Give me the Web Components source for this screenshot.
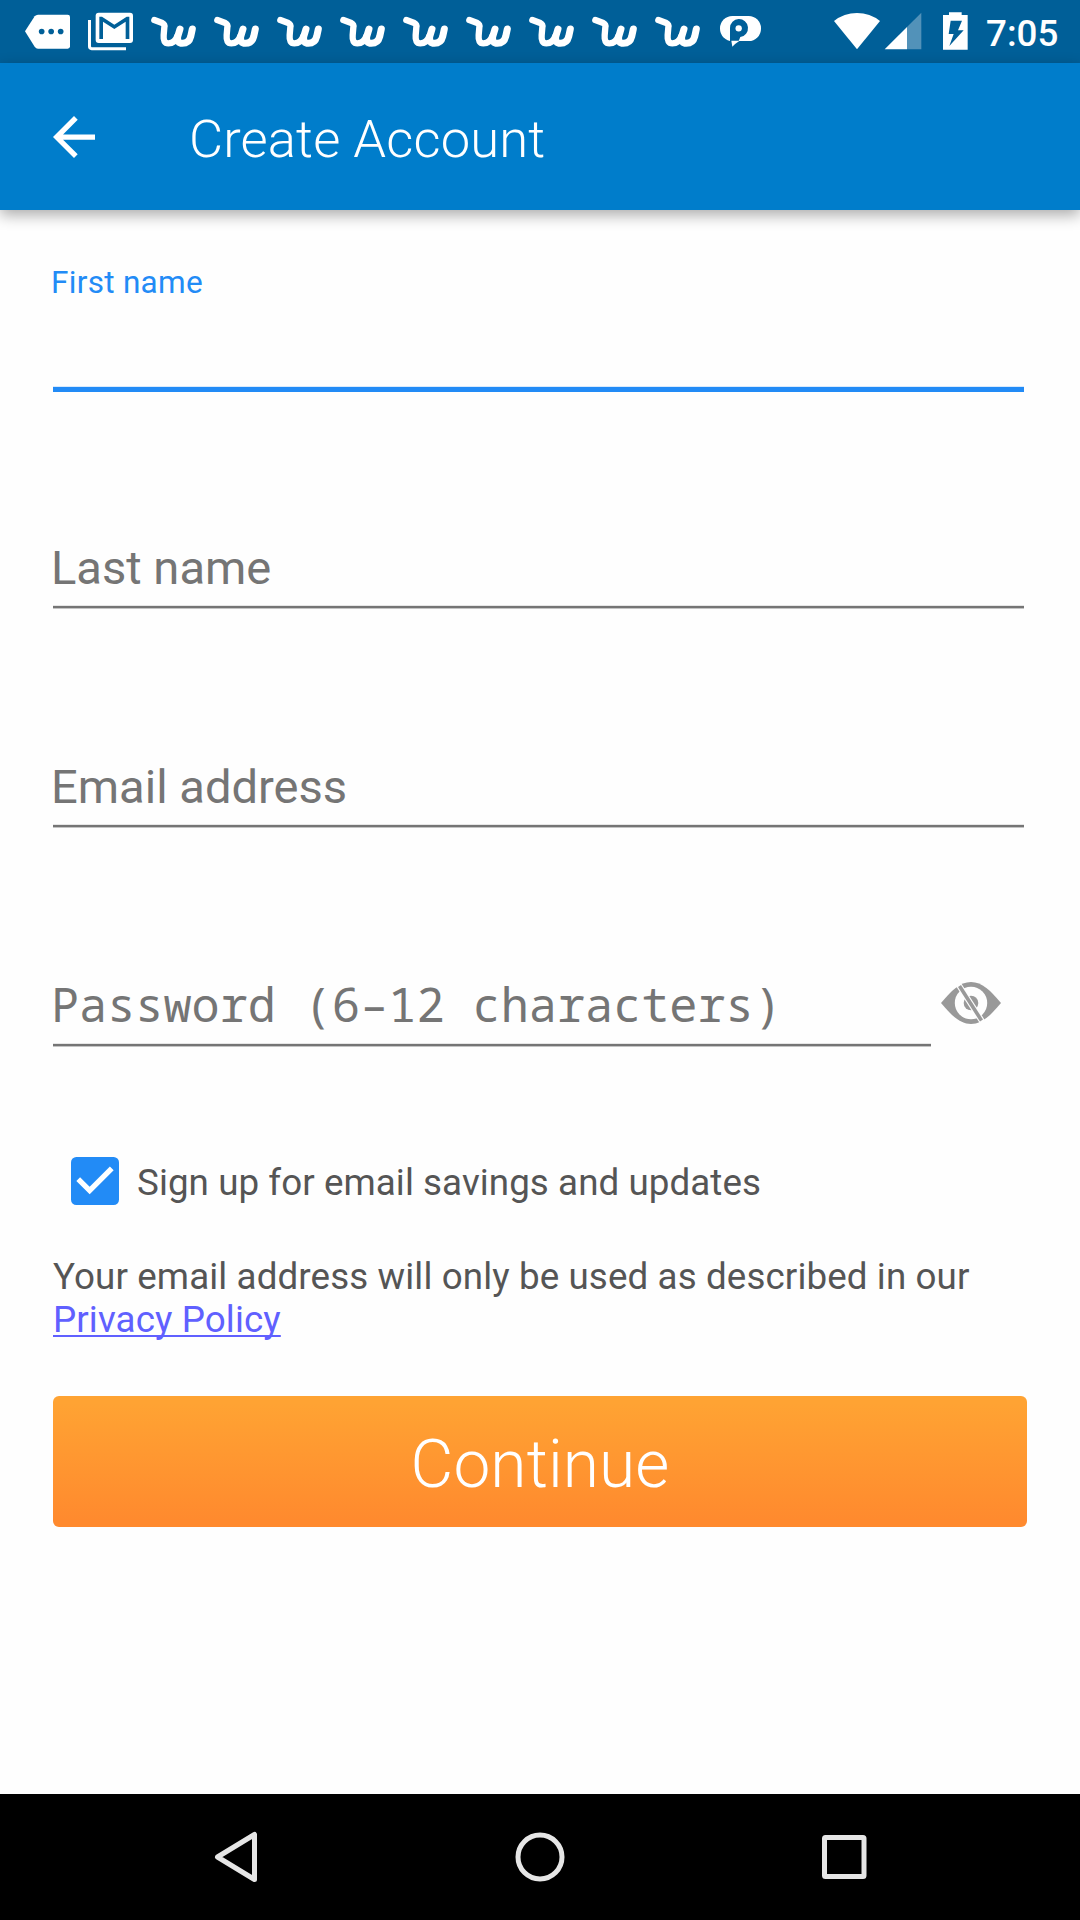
<!DOCTYPE html>
<html lang="en">
<head>
<meta charset="utf-8">
<title>Create Account</title>
<style>
html,body{margin:0;padding:0}
body{width:1080px;height:1920px;overflow:hidden;background:#fefefe;font-family:Roboto,sans-serif}
</style>
</head>
<body>
<account-screen></account-screen>
<script>
function define(name, html){
  const t=document.createElement('template');
  t.innerHTML=html;
  customElements.define(name,class extends HTMLElement{
    constructor(){super();this.attachShadow({mode:'open'}).appendChild(t.content.cloneNode(true));}
  });
}

define('wish-icon',`<style>:host{display:block;width:63px;height:63px}svg{display:block}</style>
<svg width="63" height="63" viewBox="0 0 189 189" fill="none" stroke="#fff" stroke-linecap="round" stroke-linejoin="round">
<path stroke-width="19" d="M28 60 L52 69 Q60 73 58 82 L56 106 Q54 130 70 130 Q90 130 97 108"/>
<path stroke-width="21" d="M105 87 L98 110 Q96 130 112 130 Q132 130 137 110 L142 87"/>
</svg>`);

define('status-bar',`<style>
:host{display:flex;height:63px;background:#005f98;color:#fff}
svg{display:block;flex:none}
.clock{margin-left:7px;font:500 36.75px/63px Roboto,sans-serif;padding-top:2px;white-space:nowrap}
</style>
<svg width="145" height="63" viewBox="0 0 435 189">
<path fill="#fff" d="M75 94 L104 49 Q108 44 114 44 H203 Q210 44 210 51 V139 Q210 146 203 146 H114 Q108 146 104 140Z"/>
<g fill="#005f98"><circle cx="125" cy="94.500" r="8.500"/><circle cx="153.500" cy="94.500" r="8.500"/><circle cx="182" cy="94.500" r="8.500"/></g>
<path fill="none" stroke="#fff" stroke-width="9" d="M268.500 60 V139 Q268.500 146 275 146 H378"/>
<rect x="287" y="38" width="112" height="91" rx="9" fill="#fff"/>
<path fill="#005f98" d="M298 117 V50 H306 L343 74 L380 50 H388 V117 H377 V65 L343 87 L309 65 V117Z"/>
</svg>
<wish-icon></wish-icon><wish-icon></wish-icon><wish-icon></wish-icon><wish-icon></wish-icon><wish-icon></wish-icon><wish-icon></wish-icon><wish-icon></wish-icon><wish-icon></wish-icon><wish-icon></wish-icon>
<svg width="267" height="63" viewBox="156 0 801 189">
<rect x="180" y="48" width="123" height="75" rx="37" fill="#fff"/>
<path fill="#005f98" d="M210 123 V84 A27 27 0 1 1 241 111 L236 123Z"/>
<path fill="#fff" d="M214 122 H239 Q226 130 217 140Z"/>
<circle cx="236" cy="85" r="9.500" fill="#fff"/>
<path fill="#fff" d="M522 63 Q552 39 591 39 Q630 39 660 63 L591 148Z"/>
<path fill="#fff" fill-opacity=".32" d="M741 81 L784 38 V148 H741Z"/><path fill="#fff" d="M674 148 L741 81 V148Z"/>
<path fill="#fff" d="M849 45 H867 V37 H905 V45 H923 V149 H849Z"/>
<path fill="#005f98" d="M872 62 H906 L894 91 H911 L868 138 L881 102 H866Z"/>
</svg>
<span class="clock">7:05</span>`);

define('app-bar',`<style>
:host{display:flex;align-items:center;height:147px;background:#007dcb;color:#fff;box-shadow:0 5px 14px rgba(0,0,0,.33);position:relative;z-index:1}
svg{display:block;margin:0 0 0 53px}
.t{font:300 52.5px/147px Roboto,sans-serif;padding-top:5px;margin-left:94px;white-space:nowrap;letter-spacing:.13px}
</style>
<svg width="42" height="42" viewBox="4 4 16 16"><path fill="#fff" d="M20 11H7.830l5.590-5.590L12 4l-8 8 8 8 1.410-1.410L7.830 13H20v-2z"/></svg>
<span class="t"><slot></slot></span>`);

define('text-field',`<style>
:host{display:flex;flex-direction:column;justify-content:flex-end;box-sizing:border-box;height:219px;width:971px}
.l{font-size:47.1px;line-height:56px;color:#757575;margin:0 0 9px -2px;white-space:pre}
.u{height:4px;background:linear-gradient(#e6e6e6 1px,#757575 1px 3px,#c4c4c4 3px)}
:host([focused]){height:182px;justify-content:space-between;padding-top:54px}
:host([focused]) .l{font-size:31.500px;line-height:37px;color:#228bf6;margin-bottom:0;letter-spacing:.3px}
:host([focused]) .u{height:6px;background:linear-gradient(#d8eafd 1px,#228bf6 1px)}
:host([mono]){width:878px}
:host([mono]) .l{font-family:"Noto Sans Mono","DejaVu Sans Mono",monospace;font-size:46.85px;margin-bottom:11px}
</style><span class="l"><slot></slot></span><div class="u"></div>`);

define('visibility-toggle',`<style>:host{display:block;width:60px;height:42px}svg{display:block}</style>
<svg width="60" height="42" viewBox="0 0 60 42">
<path fill="#999" d="M0 21 C10 9 19 0 30 0 C41 0 50 9 60 21 C50 33 41 42 30 42 C19 42 10 33 0 21Z"/>
<circle cx="30" cy="21" r="16.200" fill="#fefefe"/>
<circle cx="30" cy="21" r="7.300" fill="#999"/>
<path stroke="#fefefe" stroke-width="6" d="M17.500 2.500 L41.500 40"/>
<path stroke="#999" stroke-width="3.600" d="M18.500 4 L40.500 38.500"/>
</svg>`);

define('check-row',`<style>
:host{display:flex;align-items:center;height:48px;gap:18px;color:#555;font-size:36.75px;letter-spacing:.07px}
svg{display:block}span{line-height:48px;padding-top:3px;white-space:nowrap}
</style>
<svg width="48" height="48" viewBox="3 3 18 18"><rect x="3" y="3" width="18" height="18" rx="2" fill="#228bf6"/><path fill="#fff" d="M10 17l-5-5 1.410-1.410L10 14.170l7.590-7.590L19 8z"/></svg>
<span><slot></slot></span>`);

define('policy-note',`<style>
:host{display:block;font-size:36.75px;line-height:43px;color:#555;letter-spacing:.11px}
::slotted(a){color:#6060ff;text-decoration:underline;text-decoration-thickness:2px;text-underline-offset:3px;text-decoration-skip-ink:none}
</style><slot></slot>`);

define('primary-button',`<style>
:host{display:flex;justify-content:center;height:131px;width:974px;border-radius:6px;background:linear-gradient(#ffa333 5%,#ff8a2e 95%);color:#fff}
span{font:300 65.8px/131px Roboto,sans-serif;padding-top:3px;box-sizing:border-box;letter-spacing:.1px}
</style><span><slot></slot></span>`);

define('nav-bar',`<style>
:host{display:block;height:126px;background:#000}svg{display:block}
</style>
<svg width="1080" height="126" viewBox="0 0 1080 126" fill="none" stroke="#e6e6e6" stroke-width="5" stroke-linejoin="round">
<path d="M217.500 63 L254.500 40.500 V85.500Z"/><circle cx="540" cy="63" r="22"/><rect x="824.500" y="43.500" width="39.500" height="39" rx="1"/>
</svg>`);

define('account-screen',`<style>
:host{display:flex;flex-direction:column;height:1920px;width:1080px}
main{flex:1;display:flex;flex-direction:column;padding-left:53px}
.pw{display:flex;gap:10px}
visibility-toggle{margin-top:154px}
check-row{margin:110px 0 50px 18px}
policy-note{margin-bottom:55px}
</style>
<status-bar></status-bar>
<app-bar>Create Account</app-bar>
<main>
<text-field focused>First name</text-field>
<text-field style="height:217px">Last name</text-field>
<text-field>Email address</text-field>
<div class="pw"><text-field mono>Password (6–12 characters)</text-field><visibility-toggle></visibility-toggle></div>
<check-row>Sign up for email savings and updates</check-row>
<policy-note>Your email address will only be used as described in our<br><a>Privacy Policy</a></policy-note>
<primary-button>Continue</primary-button>
</main>
<nav-bar></nav-bar>`);
</script>
</body>
</html>
